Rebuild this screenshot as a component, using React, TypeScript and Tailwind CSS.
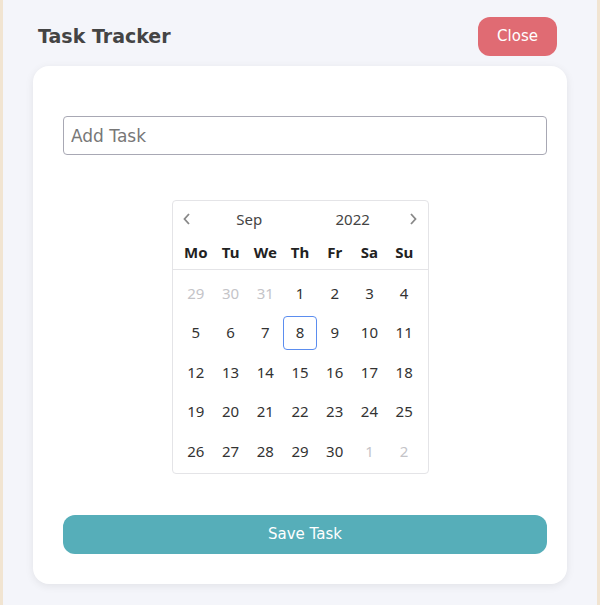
import { useState } from "react";

const weekDays = ["Mo", "Tu", "We", "Th", "Fr", "Sa", "Su"];

const weeks: { d: number; muted?: boolean }[][] = [
  [{ d: 29, muted: true }, { d: 30, muted: true }, { d: 31, muted: true }, { d: 1 }, { d: 2 }, { d: 3 }, { d: 4 }],
  [{ d: 5 }, { d: 6 }, { d: 7 }, { d: 8 }, { d: 9 }, { d: 10 }, { d: 11 }],
  [{ d: 12 }, { d: 13 }, { d: 14 }, { d: 15 }, { d: 16 }, { d: 17 }, { d: 18 }],
  [{ d: 19 }, { d: 20 }, { d: 21 }, { d: 22 }, { d: 23 }, { d: 24 }, { d: 25 }],
  [{ d: 26 }, { d: 27 }, { d: 28 }, { d: 29 }, { d: 30 }, { d: 1, muted: true }, { d: 2, muted: true }],
];

function Calendar() {
  const [selected, setSelected] = useState(8);
  return (
    <div className="w-[257px] rounded border border-[#e4e4e7] bg-white font-['Noto_Sans',sans-serif] text-[15px]">
      <div className="flex h-[36px] items-center px-[7px] text-[#444]">
        <button className="flex w-[14px] justify-center text-[#888]">
          <svg width="9" height="14" viewBox="0 0 9 14" fill="none" stroke="currentColor" strokeWidth="1.8">
            <path d="M7 2 L2.5 7 L7 12" />
          </svg>
        </button>
        <div className="flex flex-1 justify-around pl-[6px]">
          <span>Sep</span>
          <span>2022</span>
        </div>
        <button className="flex w-[14px] justify-center text-[#888]">
          <svg width="9" height="14" viewBox="0 0 9 14" fill="none" stroke="currentColor" strokeWidth="1.8">
            <path d="M2 2 L6.5 7 L2 12" />
          </svg>
        </button>
      </div>
      <div className="grid grid-cols-7 border-b border-[#e4e4e7] px-[6px] pb-[3px] pt-[1px] text-center font-bold text-[#222]">
        {weekDays.map((w) => (
          <div key={w} className="h-[28px] leading-[28px]">
            {w}
          </div>
        ))}
      </div>
      <div className="grid grid-cols-7 gap-y-[5.5px] px-[6px] pb-[5px] pt-[6px] text-center">
        {weeks.flat().map((c, i) => {
          const isSel = !c.muted && c.d === selected;
          return (
            <button
              key={i}
              onClick={() => !c.muted && setSelected(c.d)}
              className={
                "mx-auto flex h-[34px] w-[34px] items-center justify-center rounded " +
                (isSel ? "border border-[#5b8def] text-[#333]" : c.muted ? "text-[#c4c4c8]" : "text-[#333]")
              }
            >
              {c.d}
            </button>
          );
        })}
      </div>
    </div>
  );
}

export default function App() {
  return (
    <div className="h-[605px] border-x-[3px] border-[#f1e4d1] bg-[#f4f5fa] font-['DejaVu_Sans',sans-serif]">
      <div className="flex items-center justify-between pb-[10px] pl-[35px] pr-[40px] pt-[17px]">
        <h1 className="text-[19px] font-bold text-[#444]">Task Tracker</h1>
        <button className="h-[39px] w-[79px] rounded-[12px] bg-[#e06b73] text-[15px] text-white">Close</button>
      </div>
      <div className="mx-[30px] rounded-[16px] bg-white pb-[30px] pl-[30px] pr-[20px] pt-[50px] shadow-[0_2px_8px_rgba(0,0,0,0.08)]">
        <input
          className="h-[39px] w-full rounded border border-[#a8a8b4] px-[7px] text-[17px] text-[#333] placeholder:text-[#777] focus:outline-none"
          placeholder="Add Task"
        />
        <div className="mt-[45px] flex justify-center pr-[10px]">
          <Calendar />
        </div>
        <button className="mt-[41px] h-[39px] w-full rounded-[12px] bg-[#56aeb9] text-[15px] text-white">
          Save Task
        </button>
      </div>
    </div>
  );
}
